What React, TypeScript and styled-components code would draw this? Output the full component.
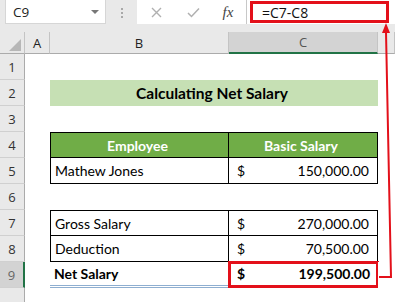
import { Fragment } from 'react';
import styled, { createGlobalStyle } from 'styled-components';

const GlobalStyle = createGlobalStyle`
  html, body {
    margin: 0;
    padding: 0;
    background: #fff;
  }
`;

const Page = styled.div`
  position: relative;
  width: 395px;
  height: 302px;
  overflow: hidden;
  background: #fff;
  font-family: Lato, "Noto Sans", sans-serif;
`;

const FormulaBar = styled.div`
  display: flex;
  align-items: flex-start;
  height: 32px;
  padding-left: 5px;
  background: #e9e9e9;
  box-sizing: border-box;
`;

const NameBox = styled.div`
  display: flex;
  align-items: center;
  justify-content: space-between;
  width: 101px;
  height: 24px;
  padding: 0 6px 0 7px;
  box-sizing: border-box;
  background: #fff;
  border: 1px solid #d6d6d6;
  border-top: none;
  font-family: "Open Sans", sans-serif;
  font-size: 13.5px;
  color: #222;
`;

const Caret = styled.span`
  width: 0;
  height: 0;
  border-left: 4px solid transparent;
  border-right: 4px solid transparent;
  border-top: 4px solid #777;
`;

const Grip = styled.div`
  display: flex;
  flex-direction: column;
  gap: 2px;
  width: 31px;
  padding-top: 8px;
  align-items: center;
  span {
    width: 2px;
    height: 2px;
    background: #a8a8a8;
  }
`;

const ButtonBox = styled.div`
  display: flex;
  align-items: center;
  width: 110px;
  height: 24px;
  background: #fff;
  border-right: 1px solid #c8c8c8;
  box-sizing: border-box;
`;

const BarIcon = styled.span<{ $w: number }>`
  display: flex;
  justify-content: center;
  width: ${({ $w }) => $w}px;
`;

const Fx = styled.span`
  font-family: "Liberation Serif", serif;
  font-style: italic;
  font-size: 15px;
  color: #444;
  width: 34px;
  text-align: center;
`;

const FormulaInput = styled.div`
  position: relative;
  flex: 1;
  height: 24px;
  display: flex;
  align-items: center;
  padding-left: 15px;
  background: #fff;
  font-family: "Open Sans", sans-serif;
  font-size: 14px;
  color: #111;
`;

const Highlight = styled.div<{ $inset: string }>`
  position: absolute;
  inset: ${({ $inset }) => $inset};
  border: 3px solid #e3101a;
  pointer-events: none;
`;

const Sheet = styled.div`
  display: grid;
  grid-template-columns: 25px 25px 179px 149px 1fr;
  grid-template-rows: 22px repeat(10, 26px);
`;

const Corner = styled.div`
  background: #e9e9e9;
  border-right: 1px solid #c4c4c4;
  border-bottom: 1px solid #ababab;
  display: flex;
  align-items: flex-end;
  justify-content: flex-end;
  padding: 0 3px 2px 0;
`;

const ColHead = styled.div<{ $selected?: boolean }>`
  display: flex;
  align-items: center;
  justify-content: center;
  background: ${({ $selected }) => ($selected ? '#d3d3d3' : '#e9e9e9')};
  border-right: 1px solid #c4c4c4;
  border-bottom: ${({ $selected }) => ($selected ? '2px solid #217346' : '1px solid #ababab')};
  box-sizing: border-box;
  font-family: "Open Sans", sans-serif;
  font-size: 13px;
  color: ${({ $selected }) => ($selected ? '#555' : '#222')};
`;

const RowHead = styled.div<{ $selected?: boolean }>`
  display: flex;
  align-items: center;
  justify-content: center;
  background: ${({ $selected }) => ($selected ? '#d3d3d3' : '#e9e9e9')};
  border-right: ${({ $selected }) => ($selected ? '2px solid #217346' : '1px solid #ababab')};
  border-bottom: 1px solid #d0d0d0;
  box-sizing: border-box;
  font-family: "Open Sans", sans-serif;
  font-size: 13px;
  color: ${({ $selected }) => ($selected ? '#666' : '#333')};
`;

type Edges = { t?: boolean; r?: boolean; b?: boolean; l?: boolean };

const Cell = styled.div<{
  $span?: number;
  $bold?: boolean;
  $bg?: string;
  $color?: string;
  $center?: boolean;
  $size?: number;
  $edges?: Edges;
  $total?: boolean;
}>`
  position: relative;
  grid-column: span ${({ $span }) => $span ?? 1};
  display: flex;
  align-items: center;
  justify-content: ${({ $center }) => ($center ? 'center' : 'space-between')};
  padding: 0 8px 0 4px;
  box-sizing: border-box;
  background: ${({ $bg }) => $bg ?? '#fff'};
  color: ${({ $color }) => $color ?? '#000'};
  font-size: ${({ $size }) => $size ?? 14}px;
  font-weight: ${({ $bold }) => ($bold ? 700 : 400)};
  white-space: nowrap;
  border-top: ${({ $edges }) => ($edges?.t ? '1px solid #000' : 'none')};
  border-right: ${({ $edges }) => ($edges?.r ? '1px solid #000' : 'none')};
  border-left: ${({ $edges }) => ($edges?.l ? '1px solid #000' : 'none')};
  border-bottom: ${({ $edges, $total }) =>
    $edges?.b ? '1px solid #000' : $total ? '3px double #8eaed0' : 'none'};
`;

const Money = styled.span`
  padding-left: 4px;
`;

const Arrow = styled.svg`
  position: absolute;
  left: 0;
  top: 0;
  pointer-events: none;
`;

const rows = [1, 2, 3, 4, 5, 6, 7, 8, 9, 10];

const MoneyCell = ({ value, bold, edges }: { value: string; bold?: boolean; edges?: Edges }) => (
  <Cell $bold={bold} $edges={edges}>
    <Money>$</Money>
    <span>{value}</span>
  </Cell>
);

const Blank = ({ n }: { n: number }) => (
  <>
    {Array.from({ length: n }).map((_, i) => (
      <Cell key={i} />
    ))}
  </>
);

export default function App() {
  return (
    <Page>
      <GlobalStyle />
      <FormulaBar>
        <NameBox>
          <span>C9</span>
          <Caret />
        </NameBox>
        <Grip>
          <span />
          <span />
          <span />
        </Grip>
        <ButtonBox>
          <BarIcon $w={38}>
            <svg width="11" height="11" viewBox="0 0 11 11">
              <path d="M1 1 L10 10 M10 1 L1 10" stroke="#b0b0b0" strokeWidth="1.4" />
            </svg>
          </BarIcon>
          <BarIcon $w={36}>
            <svg width="13" height="11" viewBox="0 0 13 11">
              <path d="M1 6 L4.5 9.5 L12 1.5" stroke="#b0b0b0" strokeWidth="1.5" fill="none" />
            </svg>
          </BarIcon>
          <Fx>fx</Fx>
        </ButtonBox>
        <FormulaInput>
          =C7-C8
          <Highlight $inset="1px 6px 1px 3px" />
        </FormulaInput>
      </FormulaBar>

      <Sheet>
        <Corner>
          <svg width="12" height="12" viewBox="0 0 12 12">
            <polygon points="12,0 12,12 0,12" fill="#b7b7b7" />
          </svg>
        </Corner>
        <ColHead>A</ColHead>
        <ColHead>B</ColHead>
        <ColHead $selected>C</ColHead>
        <ColHead />

        {rows.map(r => {
          // row 10 is cut off by the window edge, so its number is not shown
          const head = <RowHead $selected={r === 9}>{r < 10 ? r : null}</RowHead>;
          let body;
          switch (r) {
            case 2:
              body = (
                <>
                  <Cell />
                  <Cell $span={2} $center $bold $size={15.5} $bg="#c6e0b4">Calculating Net Salary</Cell>
                  <Cell />
                </>
              );
              break;
            case 4:
              body = (
                <>
                  <Cell />
                  <Cell $center $bold $bg="#70ad47" $color="#fff" $edges={{ t: true, l: true, r: true, b: true }}>
                    Employee
                  </Cell>
                  <Cell $center $bold $bg="#70ad47" $color="#fff" $edges={{ t: true, r: true, b: true }}>
                    Basic Salary
                  </Cell>
                  <Cell />
                </>
              );
              break;
            case 5:
              body = (
                <>
                  <Cell />
                  <Cell $edges={{ l: true, r: true, b: true }}>Mathew Jones</Cell>
                  <MoneyCell value="150,000.00" edges={{ r: true, b: true }} />
                  <Cell />
                </>
              );
              break;
            case 7:
              body = (
                <>
                  <Cell />
                  <Cell $edges={{ t: true, l: true, r: true, b: true }}>Gross Salary</Cell>
                  <MoneyCell value="270,000.00" edges={{ t: true, r: true, b: true }} />
                  <Cell />
                </>
              );
              break;
            case 8:
              body = (
                <>
                  <Cell />
                  <Cell $edges={{ l: true, r: true, b: true }}>Deduction</Cell>
                  <MoneyCell value="70,500.00" edges={{ r: true, b: true }} />
                  <Cell />
                </>
              );
              break;
            case 9:
              body = (
                <>
                  <Cell />
                  <Cell $bold $total>Net Salary</Cell>
                  <Cell $bold $total>
                    <Money>$</Money>
                    <span>199,500.00</span>
                    <Highlight $inset="-1px -1px -3px -1px" />
                  </Cell>
                  <Cell />
                </>
              );
              break;
            default:
              body = <Blank n={4} />;
          }
          return (
            <Fragment key={r}>
              {head}
              {body}
            </Fragment>
          );
        })}
      </Sheet>

      <Arrow width="395" height="302" viewBox="0 0 395 302">
        <polyline points="379,277 391,277 386,32" fill="none" stroke="#e3101a" strokeWidth="2" />
        <polygon points="386,23 382,33 390,33" fill="#e3101a" />
      </Arrow>
    </Page>
  );
}
